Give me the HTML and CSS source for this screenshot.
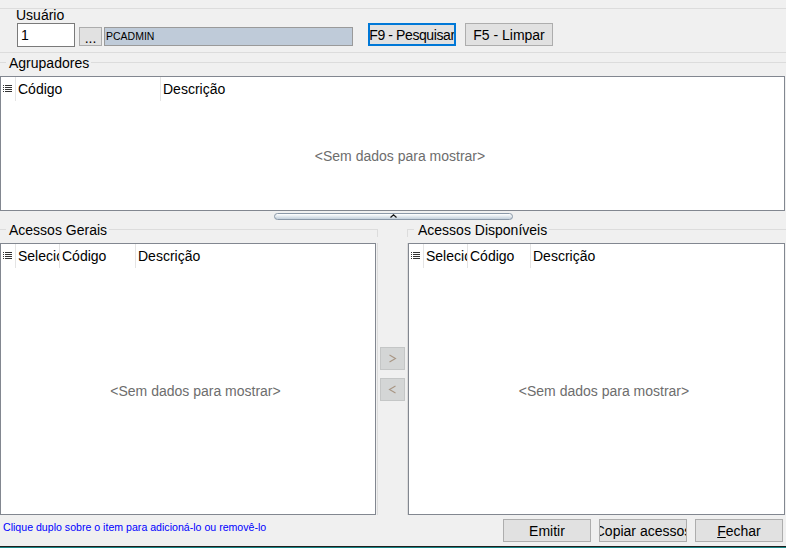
FILE: index.html
```html
<!DOCTYPE html>
<html lang="pt-BR">
<head>
    <meta charset="UTF-8">
    <title>Acessos</title>
    <link rel="stylesheet" href="styles.css">
</head>
<body>
    <div class="window">
        <div class="user-box">
            <div class="user-label">Usuário</div>
            <div class="user-row">
                <div class="code-input">1</div>
                <div class="btn dots-btn">...</div>
                <div class="name-field">PCADMIN</div>
                <div class="btn btn-top btn-focus"><span>F9 - Pesquisar</span></div>
                <div class="btn btn-top"><span>F5 - Limpar</span></div>
            </div>
        </div>

        <div class="caption caption-top"><span>Agrupadores</span></div>
        <div class="grid grid-top">
            <div class="grid-head">
                <div class="col col-icon">
                    <svg width="9" height="7" viewBox="0 0 9 7"><g fill="#333"><rect x="0" y="0" width="1" height="1"/><rect x="2" y="0" width="7" height="1"/><rect x="0" y="2" width="1" height="1"/><rect x="2" y="2" width="7" height="1"/><rect x="0" y="4" width="1" height="1"/><rect x="2" y="4" width="7" height="1"/><rect x="0" y="6" width="1" height="1"/><rect x="2" y="6" width="7" height="1"/></g></svg>
                </div>
                <div class="col col-code-wide">Código</div>
                <div class="col col-fill">Descrição</div>
            </div>
            <div class="grid-empty">&lt;Sem dados para mostrar&gt;</div>
        </div>

        <div class="splitter">
            <div class="splitter-bar">
                <svg width="7" height="4" viewBox="0 0 7 4"><polyline points="0.5,3.5 3.5,0.8 6.5,3.5" fill="none" stroke="#111" stroke-width="1.2"/></svg>
            </div>
        </div>

        <div class="lower">
            <div class="group group-left">
                <div class="caption caption-left"><span>Acessos Gerais</span></div>
                <div class="group-body">
                    <div class="grid grid-left">
                        <div class="grid-head">
                            <div class="col col-icon">
                                <svg width="9" height="7" viewBox="0 0 9 7"><g fill="#333"><rect x="0" y="0" width="1" height="1"/><rect x="2" y="0" width="7" height="1"/><rect x="0" y="2" width="1" height="1"/><rect x="2" y="2" width="7" height="1"/><rect x="0" y="4" width="1" height="1"/><rect x="2" y="4" width="7" height="1"/><rect x="0" y="6" width="1" height="1"/><rect x="2" y="6" width="7" height="1"/></g></svg>
                            </div>
                            <div class="col col-sel">Selecionado</div>
                            <div class="col col-code-left">Código</div>
                            <div class="col col-fill">Descrição</div>
                        </div>
                        <div class="grid-empty">&lt;Sem dados para mostrar&gt;</div>
                    </div>
                </div>
            </div>

            <div class="mover">
                <div class="move-btn">
                    <svg width="9" height="9" viewBox="0 0 9 9"><polyline points="1.5,1 7.5,4.5 1.5,8" fill="none" stroke="#a89684" stroke-width="1.1"/></svg>
                </div>
                <div class="move-btn">
                    <svg width="9" height="9" viewBox="0 0 9 9"><polyline points="7.5,1 1.5,4.5 7.5,8" fill="none" stroke="#a89684" stroke-width="1.1"/></svg>
                </div>
            </div>

            <div class="group group-right">
                <div class="caption caption-right"><span>Acessos Disponíveis</span></div>
                <div class="group-body">
                    <div class="grid grid-right">
                        <div class="grid-head">
                            <div class="col col-icon">
                                <svg width="9" height="7" viewBox="0 0 9 7"><g fill="#333"><rect x="0" y="0" width="1" height="1"/><rect x="2" y="0" width="7" height="1"/><rect x="0" y="2" width="1" height="1"/><rect x="2" y="2" width="7" height="1"/><rect x="0" y="4" width="1" height="1"/><rect x="2" y="4" width="7" height="1"/><rect x="0" y="6" width="1" height="1"/><rect x="2" y="6" width="7" height="1"/></g></svg>
                            </div>
                            <div class="col col-sel">Selecionado</div>
                            <div class="col col-code-right">Código</div>
                            <div class="col col-fill">Descrição</div>
                        </div>
                        <div class="grid-empty">&lt;Sem dados para mostrar&gt;</div>
                    </div>
                </div>
            </div>
        </div>

        <div class="footer">
            <div class="hint">Clique duplo sobre o item para adicioná-lo ou removê-lo</div>
            <div class="footer-buttons">
                <div class="btn btn-bottom"><span>Emitir</span></div>
                <div class="btn btn-bottom"><span>Copiar acessos</span></div>
                <div class="btn btn-bottom"><span><u>F</u>echar</span></div>
            </div>
        </div>
        <div class="bottom-edge"></div>
    </div>
</body>
</html>
```

FILE: styles.css
```css
body {
    margin: 0;
    background: #f0f0f0;
    font-family: "Liberation Sans", Arial, sans-serif;
    font-size: 14px;
    color: #000;
}
.window {
    width: 786px;
    height: 548px;
    overflow: hidden;
    display: flex;
    flex-direction: column;
}

/* usuario */
.user-box {
    box-sizing: border-box;
    height: 45px;
    margin-top: 8px;
    padding-left: 17px;
    border-top: 1px solid #dcdcdc;
    border-bottom: 1px solid #dcdcdc;
}
.user-label {
    line-height: 14px;
    margin-top: -1px;
    margin-left: -1px;
}
.user-row {
    display: flex;
    align-items: flex-start;
    margin-top: 1px;
}
.code-input {
    box-sizing: border-box;
    width: 58px;
    height: 24px;
    padding-left: 3px;
    line-height: 22px;
    background: #fff;
    border: 1px solid #7a7a7a;
}
.btn {
    box-sizing: border-box;
    display: flex;
    justify-content: center;
    align-items: center;
    overflow: hidden;
    white-space: nowrap;
    background: #e1e1e1;
    border: 1px solid #adadad;
}
.btn span {
    flex-shrink: 0;
}
.dots-btn {
    width: 23px;
    height: 19px;
    margin-top: 4px;
    margin-left: 4px;
    padding-top: 3px;
}
.name-field {
    box-sizing: border-box;
    width: 249px;
    height: 19px;
    margin-top: 4px;
    margin-left: 2px;
    padding-left: 1px;
    font-size: 10.5px;
    line-height: 17px;
    background: #bfcbd9;
    border: 1px solid #9a9a9a;
}
.btn-top {
    width: 88px;
    height: 23px;
    margin-left: 9px;
}
.btn-focus {
    margin-left: 15px;
    border: 2px solid #0078d7;
    letter-spacing: -0.4px;
}

/* captions de grupo */
.caption {
    display: flex;
    align-items: center;
}
.caption::before,
.caption::after {
    content: "";
    height: 1px;
    background: #dcdcdc;
}
.caption::before {
    width: 6px;
}
.caption::after {
    flex: 1;
}
.caption span {
    padding: 0 2px 0 3px;
}
.caption-top {
    height: 17px;
    margin-top: 1px;
}
.caption-left,
.caption-right {
    height: 15px;
}
.caption-left::after {
    align-self: flex-end;
    height: 7px;
    background: none;
    border-top: 1px solid #dcdcdc;
    border-right: 1px solid #dcdcdc;
}
.caption-right::before {
    align-self: flex-end;
    width: 6px;
    height: 7px;
    background: none;
    border-top: 1px solid #dcdcdc;
    border-left: 1px solid #dcdcdc;
}
.caption-right span {
    padding-left: 4px;
}

/* grids */
.grid {
    box-sizing: border-box;
    display: flex;
    flex-direction: column;
    background: #fff;
    border: 1px solid #828790;
}
.grid-top {
    width: 785px;
    height: 135px;
    margin-top: 5px;
}
.grid-head {
    display: flex;
    height: 24px;
    line-height: 24px;
}
.col {
    box-sizing: border-box;
    padding-left: 2px;
    overflow: hidden;
    white-space: nowrap;
    border-right: 1px solid #e4e4e4;
}
.col-icon {
    width: 15px;
    display: flex;
    align-items: center;
    padding-left: 2px;
    padding-bottom: 1px;
}
.col-code-wide {
    width: 145px;
}
.col-sel {
    width: 44px;
}
.col-code-left {
    width: 76px;
}
.col-code-right {
    width: 63px;
}
.col-fill {
    flex: 1;
    border-right: none;
}
.grid-empty {
    flex: 1;
    display: flex;
    justify-content: center;
    align-items: center;
    padding-left: 15px;
    color: #6d6d6d;
}

/* splitter */
.splitter {
    height: 11px;
    padding-top: 2px;
    box-sizing: border-box;
}
.splitter-bar {
    box-sizing: border-box;
    width: 239px;
    height: 7px;
    margin: 0 auto;
    display: flex;
    justify-content: center;
    align-items: flex-start;
    border: 1px solid #8a98a8;
    border-radius: 4px;
    background: linear-gradient(#ffffff, #c3d0dc);
}

/* parte de baixo */
.lower {
    display: grid;
    grid-template-columns: 378px 29px 1fr;
    height: 293px;
}
.group-body {
    margin-top: 6px;
}
.group-left .group-body {
    border-right: 1px solid #dcdcdc;
    height: 272px;
}
.group-right .group-body {
    border-left: 1px solid #dcdcdc;
    height: 272px;
}
.grid-left {
    width: 376px;
    height: 272px;
}
.grid-right {
    width: 377px;
    height: 272px;
}
.mover {
    display: flex;
    flex-direction: column;
    gap: 8px;
    padding-top: 125px;
    padding-left: 2px;
}
.move-btn {
    box-sizing: border-box;
    width: 25px;
    height: 23px;
    display: flex;
    justify-content: center;
    align-items: center;
    background: #d4d6d6;
    border: 1px solid #c4c6c6;
}

/* rodape */
.footer {
    display: flex;
    align-items: flex-start;
    height: 31px;
}
.hint {
    margin-top: 6px;
    margin-left: 3px;
    font-size: 10.6px;
    line-height: 13px;
    color: #0000ff;
}
.footer-buttons {
    display: flex;
    gap: 8px;
    margin-left: auto;
    margin-right: 3px;
    margin-top: 4px;
}
.btn-bottom {
    width: 88px;
    height: 23px;
}
.bottom-edge {
    height: 1px;
    border-top: 1px solid #1e1e1e;
    background: #1a8585;
}
```
